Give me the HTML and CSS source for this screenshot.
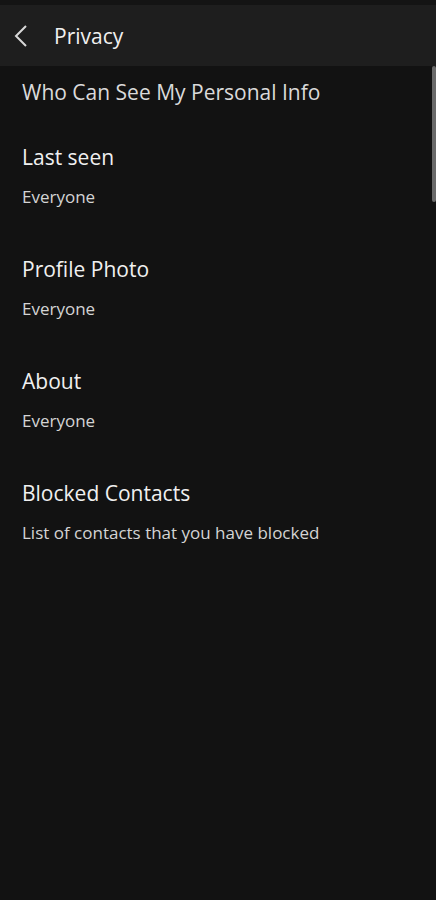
FILE: index.html
```html
<!DOCTYPE html>
<html>
<head>
<meta charset="utf-8">
<link rel="stylesheet" href="styles.css">
</head>
<body>
<div class="status"></div>
<header class="bar">
  <svg class="back" width="16" height="22" viewBox="0 0 16 22"><path d="M13 1 L3 11 L13 21" fill="none" stroke="#d8d8d8" stroke-width="2"/></svg>
  <span class="bar-title">Privacy</span>
</header>
<main class="content">
  <div class="section">Who Can See My Personal Info</div>
  <div class="item"><div class="item-title">Last seen</div><div class="item-sub">Everyone</div></div>
  <div class="item"><div class="item-title">Profile Photo</div><div class="item-sub">Everyone</div></div>
  <div class="item"><div class="item-title">About</div><div class="item-sub">Everyone</div></div>
  <div class="item"><div class="item-title">Blocked Contacts</div><div class="item-sub">List of contacts that you have blocked</div></div>
  <div class="scroll"></div>
</main>
</body>
</html>
```
FILE: styles.css
```css
html, body { margin: 0; padding: 0; background: #121212; }
body { font-family: "Open Sans", "Noto Sans", sans-serif; color: #e8e8e8; width: 436px; height: 900px; overflow: hidden; }
.status { height: 5px; background: #141414; }
.bar { height: 61px; background: #1e1e1e; display: flex; align-items: center; }
.back { margin-left: 13px; }
.bar-title { margin-left: 25px; font-size: 21px; color: #f0f0f0; }
.content { position: relative; padding: 12px 0 0 22px; }
.section { font-size: 21px; color: #dadada; line-height: 28px; }
.item { padding-top: 37px; height: 75px; }
.item-title { font-size: 21px; color: #f0f0f0; line-height: 28px; }
.item-sub { font-size: 17px; color: #d4d4d4; line-height: 22px; margin-top: 15px; }
.scroll { position: absolute; right: 0; top: 0; width: 4px; height: 136px; background: #6a6a6a; border-radius: 2px; }
```
